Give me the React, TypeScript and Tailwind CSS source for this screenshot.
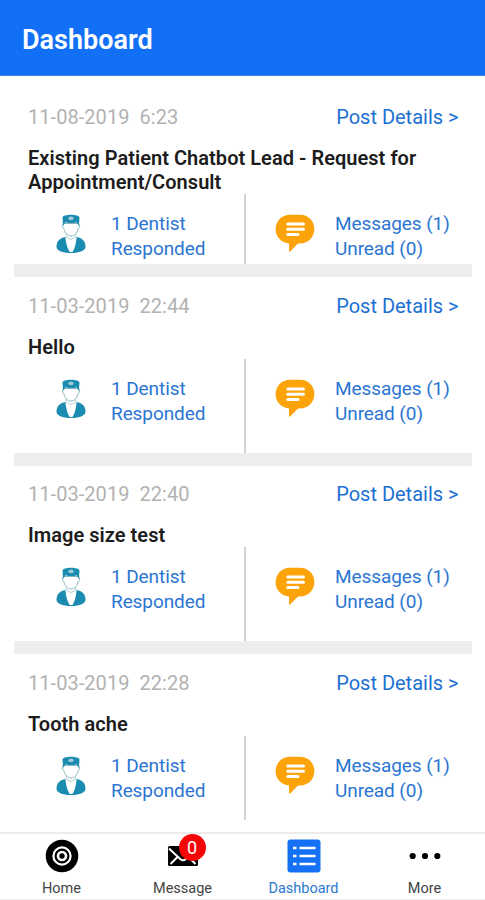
import clsx from 'clsx'

const posts = [
  { date: '11-08-2019', time: '6:23', title: 'Existing Patient Chatbot Lead - Request for Appointment/Consult' },
  { date: '11-03-2019', time: '22:44', title: 'Hello' },
  { date: '11-03-2019', time: '22:40', title: 'Image size test' },
  { date: '11-03-2019', time: '22:28', title: 'Tooth ache' },
]

function DentistIcon() {
  return (
    <svg viewBox="0 0 30 40" className="h-10 w-[30px] shrink-0">
      {/* coat */}
      <path d="M9.500 23C4 23.800.7 27 .5 32.500.4 36.500 6 39 15 39s14.600-2.500 14.500-6.500c-.2-5.500-3.500-8.700-9-9.500Z" fill="#1b8cb0" />
      <path d="M9.300 22.500C10 30 11.800 35.500 13.800 38h2.600c2-2.500 3.600-8 4.300-15.500Z" fill="#fff" />
      {/* head */}
      <path d="m10.800 20-1.200 2.800L15 25.500l5.400-2.700-1.200-2.800" fill="#fff" stroke="#9cc5cc" strokeWidth=".8" />
      <path d="M7.300 9.500c-1.500.5-1.100 4.600.6 5.100.8 4.300 3.600 7.400 7.100 7.400s6.300-3.100 7.100-7.400c1.700-.5 2.100-4.600.6-5.100Z" fill="#fff" stroke="#7fb0b6" strokeWidth=".9" />
      {/* cap */}
      <path d="M6.500 3.600C6.800 1.700 10.500.8 15 .8s8.200.9 8.500 2.800l-.6 8.200-2.500-3.600c-3 1.200-7.800 1.200-10.800 0l-2.500 3.600Z" fill="#1b8cb0" />
      <ellipse cx="15" cy="4.300" rx="2.600" ry="1.900" fill="#9fcbd9" />
    </svg>
  )
}

function ChatIcon() {
  return (
    <svg viewBox="0 0 40 38" className="h-[38px] w-10 shrink-0">
      <path d="M15 .8h10C33.500.8 39.400 7.200 39.400 15S33.500 29.500 25 29.500h-2L15.200 37.500c-1 .5-1.200 0-1.200-1v-7.100C6.500 29 .6 23 .6 15.300.6 7.500 6.500.8 15 .8Z" fill="#fca30a" />
      <path d="M12.800 10h15.700M12.800 15.200h15.700M12.800 20.400h10.200" stroke="#fff" strokeWidth="3" strokeLinecap="round" />
    </svg>
  )
}

function HomeIcon() {
  return (
    <svg viewBox="0 0 34 34" className="size-[34px]">
      <circle cx="17" cy="17" r="16.300" fill="#000" />
      <circle cx="17" cy="17" r="8.600" fill="none" stroke="#fff" strokeWidth="2.200" />
      <circle cx="17" cy="17" r="4" fill="none" stroke="#fff" strokeWidth="2.600" />
    </svg>
  )
}

function MessageIcon() {
  return (
    <svg viewBox="0 0 30 20" className="h-5 w-[30px]">
      <rect width="30" height="20" rx="1.500" fill="#000" />
      <path d="M1 2.500 12.200 13q2.800 2.500 5.600 0L29 2.500M2.500 18l7.500-7.500M27.500 18 20 10.500" fill="none" stroke="#fff" strokeWidth="2" />
    </svg>
  )
}

function DashboardIcon() {
  return (
    <svg viewBox="0 0 34 34" className="size-[34px]">
      <rect x=".5" y=".5" width="33" height="33" rx="3" fill="#1470f5" />
      <path d="M6 9h3.500M6 17h3.500M6 25h3.500M12.500 9h16M12.500 17h16M12.500 25h16" stroke="#fff" strokeWidth="2.600" />
    </svg>
  )
}

function MoreIcon() {
  return (
    <svg viewBox="0 0 32 8" className="h-2 w-8">
      <circle cx="3.700" cy="4" r="3.100" />
      <circle cx="16" cy="4" r="3.100" />
      <circle cx="28.300" cy="4" r="3.100" />
    </svg>
  )
}

const tabs = [
  { label: 'Home', Icon: HomeIcon },
  { label: 'Message', Icon: MessageIcon, badge: 0 },
  { label: 'Dashboard', Icon: DashboardIcon, active: true },
  { label: 'More', Icon: MoreIcon },
]

export default function App() {
  return (
    <div className="flex h-[900px] w-[485px] flex-col overflow-hidden bg-white font-['Roboto',sans-serif]">
      <header className="flex h-[76px] shrink-0 items-center border-b border-[#3c83ea] bg-[#1270f7] pt-1 pl-[22px]">
        <h1 className="text-[27px] leading-8 font-semibold text-white">Dashboard</h1>
      </header>

      <main className="min-h-0 flex-1 overflow-hidden pt-[12.500px] pr-[13px] pl-3.5">
        {posts.map((post, i) => (
          <article
            key={post.time}
            className={clsx(
              'flex flex-col',
              i < posts.length - 1 ? 'h-[188.500px] border-b-[13px] border-[#eeeeef]' : 'h-[166px]'
            )}
          >
            <div className="flex h-[57.500px] shrink-0 items-center justify-between pr-[13.500px] pl-3.5 text-[20px] whitespace-pre">
              <span className="tracking-[0.05px] text-[#b2b2b2]">{post.date}  {post.time}</span>
              <a className="text-[#1b70d2]">Post Details &gt;</a>
            </div>
            <h2 className="shrink-0 pr-10 pl-3.5 text-[20px] leading-[24px] font-semibold tracking-[0.040px] text-[#1c1c1c]">{post.title}</h2>
            <div className="flex min-h-0 flex-1 text-[19px] leading-[25.300px] tracking-[-0.080px] text-[#2b75d3]">
              <div className="flex w-[232px] shrink-0 items-start border-r-2 border-[#d2d2d4] pt-[17px] pl-[42px]">
                <div className="pt-[3px]"><DentistIcon /></div>
                <p className="pl-[25px]">1 Dentist<br />Responded</p>
              </div>
              <div className="flex items-start pt-[17px] pl-[29px]">
                <div className="pt-[3px]"><ChatIcon /></div>
                <p className="pl-5 whitespace-nowrap">Messages (1)<br />Unread (0)</p>
              </div>
            </div>
          </article>
        ))}
      </main>

      <nav className="grid h-[68px] shrink-0 grid-cols-4 border-t-2 border-b border-[#ececec] pl-px">
        {tabs.map(({ label, Icon, badge, active }) => (
          <a key={label} className="flex flex-col items-center pt-[5px]">
            <span className="relative flex h-[34px] items-center">
              <Icon />
              {badge !== undefined && (
                <span className="absolute -top-[5px] left-[11px] flex size-[27px] items-center justify-center rounded-full bg-[#f50505] text-[18px] text-white">
                  {badge}
                </span>
              )}
            </span>
            <span className={clsx('mt-1.5 text-[14.500px] leading-5', active ? 'text-[#2b79cf]' : 'text-[#444]')}>{label}</span>
          </a>
        ))}
      </nav>
    </div>
  )
}
